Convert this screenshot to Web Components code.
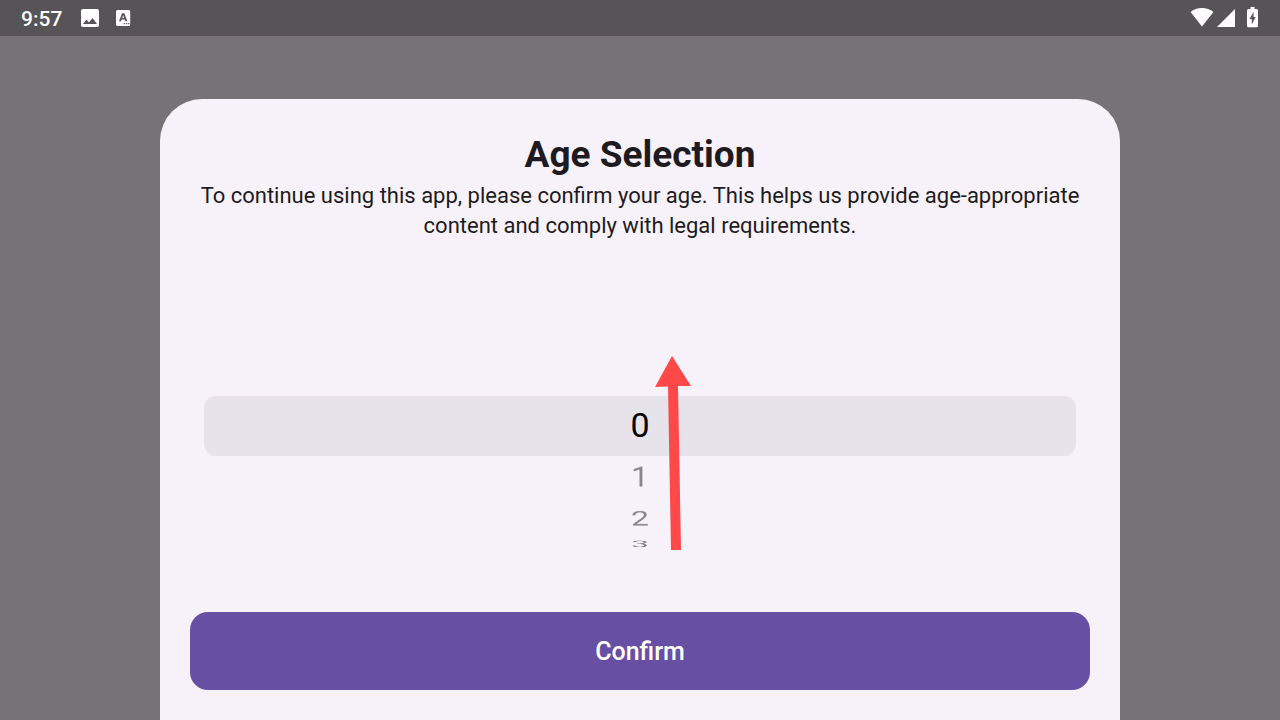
<!DOCTYPE html>
<html lang="en">
<head>
<meta charset="utf-8">
<meta name="viewport" content="width=device-width, initial-scale=1">
<title>Age Selection</title>
<style>
  html, body { height: 100%; margin: 0; }
  body { font-family: Roboto, "Liberation Sans", sans-serif; }
</style>
</head>
<body>
<app-screen>
  <status-bar slot="status" time="9:57"></status-bar>
  <bottom-sheet>
    <span slot="title">Age Selection</span>
    <span slot="text">To continue using this app, please confirm your age. This helps us provide age-appropriate content and comply with legal requirements.</span>
    <age-wheel></age-wheel>
    <primary-button slot="action">Confirm</primary-button>
  </bottom-sheet>
</app-screen>
<script>
const define = (name, html, setup) => {
  const template = document.createElement('template');
  template.innerHTML = html;
  customElements.define(name, class extends HTMLElement {
    constructor() {
      super();
      this.attachShadow({ mode: 'open' }).append(template.content.cloneNode(true));
    }
    connectedCallback() { if (setup) setup(this, this.shadowRoot); }
  });
};

define('app-screen', `
  <style>
    :host { display: flex; flex-direction: column; min-height: 100%; background: #777275; }
    main { flex: 1; display: flex; justify-content: center; padding-top: 63px; }
    ::slotted(bottom-sheet) { width: 75%; }
  </style>
  <slot name="status"></slot>
  <main><slot></slot></main>`);

define('status-bar', `
  <style>
    :host { display: flex; align-items: center; justify-content: space-between; box-sizing: border-box;
            height: 36px; padding: 0 18px 0 21px; background: #575457; color: #fff; }
    div { display: flex; align-items: center; }
    .left { gap: 16px; }
    .right { gap: 2px; }
    time { font-size: 21px; font-weight: 500; line-height: 36px; padding-top: 2px; }
    svg { display: block; fill: currentColor; }
  </style>
  <div class="left">
    <time></time>
    <svg width="22" height="22" viewBox="0 1 22 22" aria-label="Picture"><path d="M21 19V5c0-1.100-.9-2-2-2H5c-1.100 0-2 .9-2 2v14c0 1.100.9 2 2 2h14c1.100 0 2-.9 2-2zM8.500 13.500l2.500 3.010L14.500 12l4.500 6H5l3.500-4.500z"/></svg>
    <svg width="16" height="18" viewBox="1 0 16 18" aria-label="Text"><path fill-rule="evenodd" d="M2.600 1h11a1.600 1.600 0 0 1 1.600 1.600V15.500A1.600 1.600 0 0 1 13.600 17H2.600A1.600 1.600 0 0 1 1 15.500V2.600A1.600 1.600 0 0 1 2.600 1zM7.100 4.200L4 12.200h2l.6-1.700h3.200l.6 1.700h2L9.300 4.200zM8.200 6.200L9.200 9H7.200zM8.600 14v1.300h1.300V14zm2.300 0v1.300h1.300V14zm2.300 0v1.300h1.300V14z"/></svg>
  </div>
  <div class="right">
    <svg width="24" height="20" viewBox="0 0 24 20" aria-label="Wi-Fi"><path d="M12 18.500L.6 4C3.800 1.300 7.600 0 12 0s8.200 1.300 11.400 4z"/></svg>
    <svg width="20" height="20" viewBox="0 0 20 20" aria-label="Signal"><path d="M19 1v18H1z"/></svg>
    <svg width="24" height="22" viewBox="-2 0 24 22" aria-label="Charging"><path fill-rule="evenodd" d="M10.500 0h4v2H16.500A1.500 1.500 0 0 1 18 3.500v15.500a1.200 1.200 0 0 1-1.200 1.200H8.200A1.200 1.200 0 0 1 7 19V3.500A1.500 1.500 0 0 1 8.500 2H10.500zM13.500 5L9.500 12h2.300V17.500l3.900-7.500h-2.200z"/></svg>
  </div>`, (host, root) => {
    root.querySelector('time').textContent = host.getAttribute('time');
  });

define('bottom-sheet', `
  <style>
    :host { display: block; }
    section { display: flex; flex-direction: column; box-sizing: border-box; height: 100%;
              padding: 32px 30px 30px; border-radius: 42px 42px 0 0; background: #f7f2fa; color: #1d1b20; }
    h1 { margin: 0 0 2px; font-size: 37px; line-height: 48px; font-weight: 700; text-align: center; }
    p { margin: 0; font-size: 22px; line-height: 30px; text-align: center; }
    .body { flex: 1; display: grid; align-items: center; padding: 0 14px 2px; }
  </style>
  <section role="dialog" aria-labelledby="heading">
    <h1 id="heading"><slot name="title"></slot></h1>
    <p><slot name="text"></slot></p>
    <div class="body"><slot></slot></div>
    <slot name="action"></slot>
  </section>`);

define('age-wheel', `
  <style>
    :host { display: block; position: relative; }
    fieldset { display: grid; grid-template: 60px / 1fr; min-width: 0; margin: 0; padding: 0; border: 0;
               border-radius: 12px; background: #e6e4ea; }
    label { grid-area: 1 / 1; text-align: center; font-size: 32px; line-height: 60px; color: #000; }
    label:not(:first-of-type) { opacity: .45; transform: rotateX(calc(var(--step) * -24deg)) translateZ(124px); }
    label:first-of-type { font-size: 34px; line-height: 58px; }
    input { position: absolute; opacity: 0; pointer-events: none; }
    svg { position: absolute; left: 50%; top: -42px; width: 68px; height: 200px; pointer-events: none; }
  </style>
  <fieldset aria-label="Age"></fieldset>
  <svg viewBox="0 0 68 200" aria-hidden="true"><path fill="#ff4848" d="M32 2L51 32H38L41 196H31L28 32.500L15 33z"/></svg>`,
  (host, root) => {
    const wheel = root.querySelector('fieldset');
    for (let age = 0; age < 4; age++) {
      const label = document.createElement('label');
      const input = document.createElement('input');
      input.type = 'radio';
      input.name = 'age';
      input.value = age;
      input.checked = age === 0;
      label.style.setProperty('--step', age);
      label.append(input, String(age));
      wheel.append(label);
    }
  });

define('primary-button', `
  <style>
    :host { display: block; }
    button { display: block; width: 100%; height: 78px; padding: 2px 0 0; border: 0; border-radius: 18px; background: #674fa3;
             color: #fff; font: 500 25px/30px Roboto, "Liberation Sans", sans-serif; cursor: pointer; }
  </style>
  <button type="button"><slot></slot></button>`);
</script>
</body>
</html>
